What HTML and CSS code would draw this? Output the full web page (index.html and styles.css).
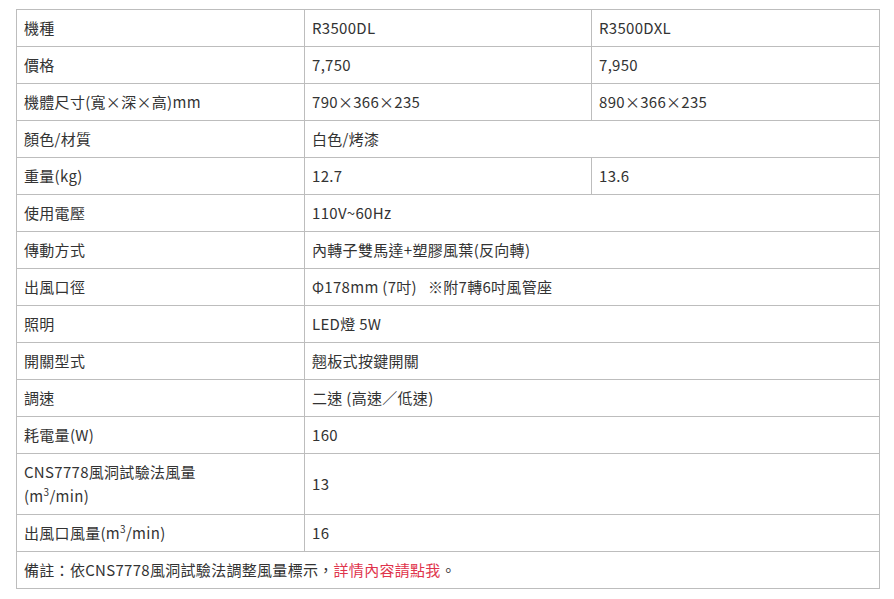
FILE: index.html
```html
<!DOCTYPE html>
<html lang="zh-Hant">
<head>
<meta charset="utf-8">
<title>規格表</title>
<link rel="stylesheet" href="styles.css">
</head>
<body>
<div class="wrap">
<table class="spec">
  <colgroup><col class="c1"><col class="c2"><col class="c3"></colgroup>
  <tbody>
    <tr><td>機種</td><td>R3500DL</td><td>R3500DXL</td></tr>
    <tr><td>價格</td><td>7,750</td><td>7,950</td></tr>
    <tr><td>機體尺寸(寬×深×高)mm</td><td>790×366×235</td><td>890×366×235</td></tr>
    <tr><td>顏色/材質</td><td colspan="2">白色/烤漆</td></tr>
    <tr><td>重量(kg)</td><td>12.7</td><td>13.6</td></tr>
    <tr><td>使用電壓</td><td colspan="2">110V~60Hz</td></tr>
    <tr><td>傳動方式</td><td colspan="2">內轉子雙馬達+塑膠風葉(反向轉)</td></tr>
    <tr><td>出風口徑</td><td colspan="2">Φ178mm (7吋) &nbsp; ※附7轉6吋風管座</td></tr>
    <tr><td>照明</td><td colspan="2">LED燈 5W</td></tr>
    <tr><td>開關型式</td><td colspan="2">翹板式按鍵開關</td></tr>
    <tr><td>調速</td><td colspan="2">二速 (高速／低速)</td></tr>
    <tr><td>耗電量(W)</td><td colspan="2">160</td></tr>
    <tr><td>CNS7778風洞試驗法風量<br>(m<sup>3</sup>/min)</td><td colspan="2">13</td></tr>
    <tr><td>出風口風量(m<sup>3</sup>/min)</td><td colspan="2">16</td></tr>
    <tr><td colspan="3">備註：依CNS7778風洞試驗法調整風量標示，<a class="more" href="#">詳情內容請點我</a>。</td></tr>
  </tbody>
</table>
</div>
</body>
</html>
```
FILE: styles.css
```css
html, body {
  margin: 0;
  padding: 0;
  background: #fff;
}
.wrap {
  padding: 9px 15px 0 16px;
}
.spec {
  width: 863px;
  border-collapse: collapse;
  table-layout: fixed;
  font-family: "Noto Sans CJK TC", "Noto Sans", sans-serif;
  font-size: 15px;
  line-height: 24px;
  letter-spacing: 0.3px;
  color: #333;
}
.c1 { width: 288px; }
.c2 { width: 287px; }
.c3 { width: 288px; }
.spec td {
  border: 1px solid #bdbdbd;
  padding: 6px 7px;
  vertical-align: middle;
  text-align: left;
}
.spec sup {
  font-size: 10px;
  line-height: 0;
  vertical-align: 6px;
}
.more {
  color: #e0344c;
  text-decoration: none;
}
```
